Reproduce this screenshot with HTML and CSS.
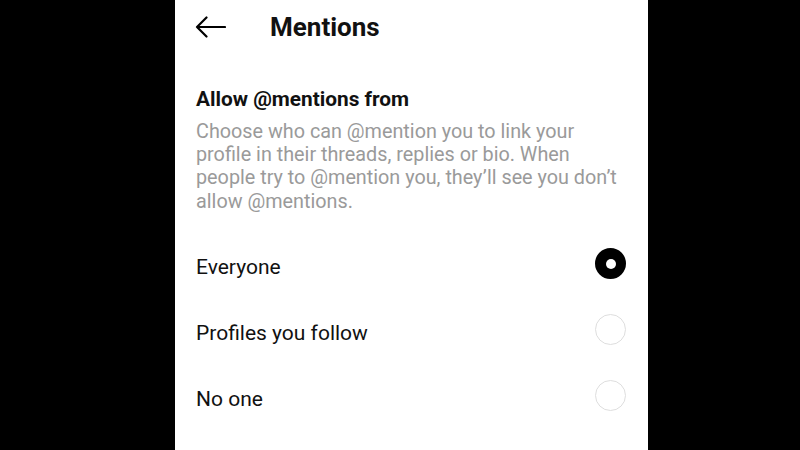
FILE: index.html
```html
<!DOCTYPE html>
<html lang="en">
<head>
  <meta charset="UTF-8">
  <meta name="viewport" content="width=device-width, initial-scale=1.0">
  <title>Mentions</title>
  <link rel="stylesheet" href="styles.css">
</head>
<body>

  <div class="screen">
    <div class="header">
      <svg class="back-icon" width="31" height="22" viewBox="0 0 31 22">
        <path d="M30 11H2M11.5 1.5L2 11l9.5 9.5" fill="none" stroke="#000" stroke-width="2.2" stroke-linecap="round" stroke-linejoin="round"/>
      </svg>
      <div class="header-title">Mentions</div>
    </div>

    <div class="section">
      <div class="section-title">Allow @mentions from</div>
      <div class="section-desc">
        Choose who can @mention you to link your profile in their threads, replies or bio. When people try to @mention you, they’ll see you don’t allow @mentions.
      </div>
    </div>

    <div class="options">
      <div class="option">
        <span>Everyone</span>
        <span class="radio selected"></span>
      </div>
      <div class="option">
        <span>Profiles you follow</span>
        <span class="radio"></span>
      </div>
      <div class="option">
        <span>No one</span>
        <span class="radio"></span>
      </div>
    </div>
  </div>

</body>
</html>
```

FILE: styles.css
```css
body {
  font-family: Roboto, "Noto Sans", Arial, sans-serif;
  background-color: #000;
  color: #000;
  margin: 0;
  height: 100vh;
  overflow: hidden;
}

.screen {
  margin-left: 175px;
  width: 473px;
  height: 100vh;
  background-color: #fff;
}

.header {
  display: flex;
  align-items: center;
  height: 53px;
  padding-left: 20px;
}

.back-icon {
  margin-right: 44px;
}

.header-title {
  font-size: 26px;
  font-weight: bold;
  color: #111;
}

.section {
  padding: 34px 22px 0 21px;
}

.section-title {
  font-size: 20.8px;
  font-weight: bold;
  color: #111;
  margin-bottom: 9px;
}

.section-desc {
  font-size: 19.8px;
  line-height: 23.2px;
  color: #9a9a9a;
}

.options {
  padding: 18px 22px 0 21px;
}

.option {
  display: flex;
  justify-content: space-between;
  align-items: center;
  height: 66px;
  font-size: 21px;
  color: #111;
}

.option span:first-child {
  margin-top: 7px;
}

.radio {
  width: 29px;
  height: 29px;
  border-radius: 50%;
  border: 1.5px solid #dedede;
}

.radio.selected {
  width: 21px;
  height: 21px;
  border: 5px solid #000;
  background-color: #000;
  position: relative;
}

.radio.selected::after {
  content: "";
  position: absolute;
  left: 5.5px;
  top: 5.5px;
  width: 10px;
  height: 10px;
  border-radius: 50%;
  background-color: #fff;
}
```
